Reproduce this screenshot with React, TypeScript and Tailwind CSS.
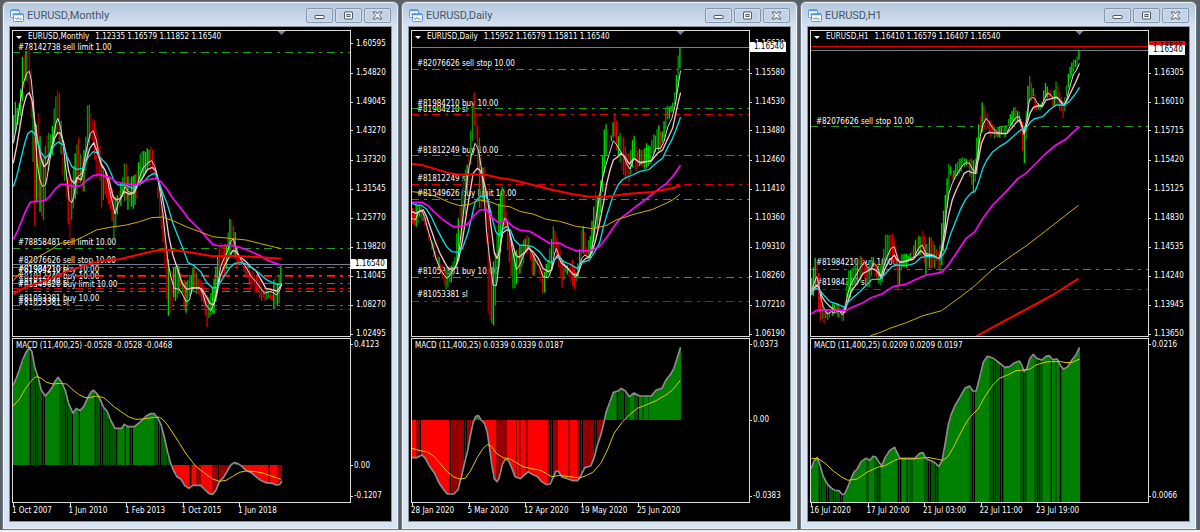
import type { ReactNode } from "react";

// All series are drawn on a grid of 3 units per pixel: "x,y x,y ..."
type Level = { y: number; color: string; solid?: boolean };
type Label = { y: number; text: string };

type Chart = {
    title: string;
    quote: string;
    x0: number;
    levels: Level[];
    labels: Label[];
    highs: string;
    lows: string;
    averages: { color: string; width: number; points: string }[];
    scale: string[];
    bid: number;
    ask?: number;
    macdText: string;
    macd: string;
    signal: string;
    zero: number;
    dark: [number, number][];
    macdScale: Label[];
    dates: string[];
};

const GREEN = "#22a022";
const RED = "#e00000";
const SLATE = "#708090";

const PRICE_TOP = 90;
const PRICE_HEIGHT = 921;
const MACD_TOP = 9;
const MACD_HEIGHT = 495;
const PLOT_WIDTH = 1020;
const BAR = 5.29;

const charts: Chart[] = [
    {
        title: "EURUSD,Monthly",
        quote: "1.12335 1.16579 1.11852 1.16540",
        x0: 36,
        levels: [
            { y: 156, color: GREEN },
            { y: 746, color: GREEN },
            { y: 792, color: SLATE, solid: true },
            { y: 802, color: GREEN },
            { y: 825, color: GREEN },
            { y: 828, color: RED },
            { y: 849, color: GREEN },
            { y: 865, color: RED },
            { y: 873, color: GREEN },
            { y: 915, color: GREEN },
            { y: 928, color: RED },
        ],
        labels: [
            { y: 141, text: "#78142738 sell limit 1.00" },
            { y: 731, text: "#78858481 sell limit 10.00" },
            { y: 785, text: "#82076626 sell stop 10.00" },
            { y: 811, text: "#81984210 buy 10.00" },
            { y: 812, text: "#81984210 sl" },
            { y: 834, text: "#81812249 buy 10.00" },
            { y: 850, text: "#81812249 sl" },
            { y: 857, text: "#81549626 buy limit 10.00" },
            { y: 899, text: "#81053381 buy 10.00" },
            { y: 912, text: "#81053381 sl" },
        ],
        highs: "40,360 46,295 52,330 58,300 64,250 68,155 76,160 88,135 94,200 98,290 104,400 115,330 122,430 130,480 138,420 146,390 152,400 158,370 164,310 173,268 180,280 184,370 192,450 200,500 208,540 216,540 224,470 236,395 244,480 252,450 258,400 264,300 270,320 276,345 284,360 292,400 300,440 310,500 318,520 328,535 336,560 344,590 352,590 360,570 368,530 374,495 378,483 386,540 398,528 410,520 420,465 432,455 445,445 456,440 466,485 474,560 484,600 494,650 500,730 510,800 520,810 536,782 548,830 558,850 570,825 584,800 600,835 612,850 624,890 636,880 648,810 660,735 668,720 680,740 690,658 700,665 706,680 714,760 724,770 736,795 748,800 760,810 776,830 790,860 806,870 820,875 826,812 836,850 846,795",
        lows: "40,440 50,385 60,370 68,300 80,250 90,300 98,450 104,690 112,600 120,640 130,670 140,560 150,500 160,460 172,400 182,460 190,530 200,600 206,710 210,745 216,650 224,630 236,560 246,550 250,610 260,490 270,420 280,440 290,540 300,540 306,640 316,600 328,610 338,680 344,735 350,670 360,640 370,590 384,630 404,625 416,575 430,545 445,510 460,520 470,540 478,640 490,720 498,860 506,960 514,960 522,900 534,910 546,870 556,960 566,910 580,880 600,890 612,920 622,985 634,960 646,940 656,860 664,800 676,830 690,760 702,760 710,810 724,800 740,850 756,865 770,880 784,900 800,910 812,890 826,945 838,920 848,850",
        averages: [
            { color: "#d8d8d8", width: 3, points: "40,430 50,380 60,310 70,250 80,220 88,214 94,240 100,300 106,400 112,490 120,540 128,560 136,555 142,530 150,480 160,420 168,370 174,355 182,380 190,430 196,490 202,540 208,600 216,608 222,590 228,550 234,530 246,520 254,480 264,430 272,400 280,392 290,420 298,470 306,500 316,510 324,545 334,590 346,642 356,610 366,590 376,560 386,575 400,580 414,550 424,520 430,505 445,488 456,482 466,500 474,530 482,580 490,640 498,720 506,790 514,830 524,865 540,868 550,885 560,905 570,900 578,865 600,862 610,880 620,915 634,932 646,905 656,850 664,800 674,775 684,755 694,725 702,716 710,745 720,770 732,790 742,805 756,830 770,845 784,865 796,880 810,875 822,878 832,885 842,870 848,850" },
            { color: "#ffc0cb", width: 4, points: "40,490 50,440 60,380 70,320 80,285 88,278 96,300 104,360 112,415 122,470 132,500 142,490 152,455 164,415 174,398 182,400 192,430 200,470 206,510 214,540 224,550 232,532 244,540 256,490 270,445 282,428 294,460 304,490 316,510 328,540 340,590 350,600 362,595 374,575 390,583 404,578 414,555 428,535 444,508 458,502 468,512 476,540 488,590 500,655 508,710 520,765 532,800 548,850 562,868 580,863 606,866 618,885 632,910 642,915 652,885 662,830 674,800 690,770 700,752 708,753 720,768 740,785 754,800 770,812 780,830 800,865 820,870 834,873 846,855" },
            { color: "#00e0e8", width: 4, points: "40,560 50,530 62,480 74,430 84,400 94,393 102,398 112,420 122,455 136,475 150,460 164,435 176,426 190,435 202,470 216,500 230,508 250,505 266,470 280,455 290,458 304,475 322,495 334,520 344,545 356,555 376,555 400,565 412,555 430,548 446,530 462,520 470,524 478,545 490,580 504,615 520,670 536,710 550,745 566,788 584,797 604,815 620,845 640,864 654,862 670,835 690,805 706,790 724,788 740,792 760,805 780,820 800,838 820,848 836,854 846,850" },
            { color: "#ff00ff", width: 5, points: "40,718 54,690 70,650 82,622 92,606 104,604 122,604 138,600 150,588 168,565 182,553 200,553 222,560 244,556 262,540 280,527 298,524 330,532 350,546 380,552 410,554 440,540 468,535 484,545 500,564 520,595 546,627 566,655 600,688 640,733 660,738 690,735 720,742 750,752 780,766 810,783 846,795" },
            { color: "#d0b000", width: 3, points: "40,842 80,795 120,768 160,745 180,730 216,726 250,710 290,690 330,682 380,675 420,665 456,653 490,651 520,662 560,680 600,695 640,710 700,716 740,720 780,730 846,746" },
            { color: "#ff0000", width: 6, points: "40,882 80,860 120,848 160,832 200,815 240,802 280,788 320,780 360,778 400,768 440,758 480,749 520,750 560,755 600,762 640,769 700,768 760,770 846,776" },
        ],
        scale: ["1.60595", "1.54820", "1.49045", "1.43270", "1.37320", "1.31545", "1.25770", "1.19820", "1.14045", "1.08270", "1.02495"],
        bid: 792,
        macdText: "MACD (11,400,25) -0.0528 -0.0528 -0.0468",
        macd: "40,150 48,132 58,105 68,75 78,52 88,38 96,50 104,95 114,125 124,165 136,183 148,170 158,155 166,138 175,127 184,140 196,165 206,205 220,235 230,220 240,227 252,215 264,188 276,168 282,166 296,182 312,218 322,228 334,258 346,280 366,280 374,268 384,275 404,275 420,262 440,243 452,236 464,236 474,248 484,268 494,305 504,350 512,380 520,402 532,425 544,432 556,452 568,460 580,451 604,451 614,462 628,475 640,478 650,465 660,440 672,428 684,408 696,388 704,383 716,386 728,394 740,406 756,413 770,425 784,436 800,443 820,445 830,450 842,448 848,438",
        signal: "40,213 60,190 75,163 92,140 104,127 114,125 124,130 140,142 160,147 178,145 200,147 216,162 236,178 256,188 268,188 290,183 312,188 324,198 340,213 364,230 386,245 408,253 430,252 464,247 480,247 492,255 504,270 520,294 540,325 560,357 590,395 620,418 640,432 660,439 680,436 700,424 720,412 740,408 770,410 790,414 810,421 845,433",
        zero: 391,
        dark: [[88, 134], [174, 220], [232, 238], [284, 356], [374, 378], [386, 398], [462, 518], [568, 578], [588, 604], [636, 690], [702, 724], [806, 810], [832, 848]],
        macdScale: [{ y: 29, text: "0.4123" }, { y: 392, text: "0.00" }, { y: 484, text: "-0.1207" }],
        dates: ["1 Oct 2007", "1 Jun 2010", "1 Feb 2013", "1 Oct 2015", "1 Jun 2018"],
    },
    {
        title: "EURUSD,Daily",
        quote: "1.15952 1.16579 1.15811 1.16540",
        x0: 33,
        levels: [
            { y: 141, color: SLATE, solid: true },
            { y: 207, color: GREEN },
            { y: 325, color: GREEN },
            { y: 343, color: RED },
            { y: 467, color: GREEN },
            { y: 554, color: RED },
            { y: 598, color: GREEN },
            { y: 833, color: GREEN },
            { y: 904, color: RED },
        ],
        labels: [
            { y: 191, text: "#82076626 sell stop 10.00" },
            { y: 310, text: "#81984210 buy 10.00" },
            { y: 328, text: "#81984210 sl" },
            { y: 452, text: "#81812249 buy 10.00" },
            { y: 538, text: "#81812249 sl" },
            { y: 583, text: "#81549626 buy limit 10.00" },
            { y: 818, text: "#81053381 buy 10.00" },
            { y: 888, text: "#81053381 sl" },
        ],
        highs: "36,630 48,620 56,610 66,620 76,660 88,690 98,720 110,750 122,780 134,810 144,800 156,790 166,770 172,670 180,630 188,560 196,500 206,480 214,370 222,262 228,325 238,400 248,500 256,490 260,560 266,650 272,800 284,780 292,700 298,600 306,560 314,570 320,650 330,700 340,760 354,750 366,730 376,720 386,700 394,750 408,770 420,780 432,820 444,780 456,720 462,665 470,710 480,740 492,800 510,790 516,770 530,810 538,770 546,680 554,680 562,740 572,700 580,650 588,570 598,590 606,520 614,380 624,370 632,440 640,375 644,332 650,345 656,400 668,395 680,440 692,470 702,392 710,440 724,450 732,440 744,432 756,430 762,395 770,400 778,372 788,395 796,345 802,310 812,312 824,300 830,230 838,160 844,135",
        lows: "36,680 48,690 60,650 70,680 84,720 96,760 110,810 122,810 134,860 142,870 152,860 162,830 172,800 180,750 190,700 200,620 210,520 222,390 230,430 238,630 246,620 254,600 260,720 266,960 275,985 282,980 290,880 300,780 310,720 318,690 328,790 338,870 348,880 356,840 368,800 380,760 390,770 400,840 412,800 424,850 432,910 440,840 456,820 464,740 474,780 484,850 490,880 498,820 512,860 524,870 536,850 544,790 556,770 570,790 580,760 592,700 604,640 612,560 622,440 634,440 644,400 652,460 664,500 676,530 690,545 702,490 712,520 726,510 738,530 750,500 762,460 776,460 790,440 804,370 820,345 830,310 844,205",
        averages: [
            { color: "#d8d8d8", width: 3, points: "36,655 46,660 56,635 66,632 74,650 84,690 96,730 108,775 120,805 132,825 142,835 152,822 160,810 170,795 178,750 186,680 194,610 202,540 208,500 216,460 226,430 236,450 244,500 252,570 260,690 270,780 280,855 290,857 298,790 306,700 314,655 320,658 330,700 340,760 350,810 360,795 370,770 386,740 398,760 410,785 420,800 430,830 446,833 456,810 464,765 470,745 480,770 492,790 510,810 528,832 538,815 546,775 556,765 568,772 576,755 584,700 592,640 600,590 608,540 618,500 630,460 642,422 652,435 664,455 674,470 684,495 692,507 704,475 712,480 724,490 740,485 756,483 770,445 784,445 794,425 806,380 818,355 828,315 838,250 844,212" },
            { color: "#ffc0cb", width: 4, points: "36,635 48,640 60,633 70,630 80,650 92,685 106,725 120,760 136,790 146,807 164,807 176,780 188,720 200,640 210,580 220,520 232,505 240,510 248,530 256,560 264,600 274,680 284,760 292,775 300,750 308,700 320,690 328,690 338,730 348,765 358,772 372,760 388,745 400,755 416,775 430,805 446,815 456,810 464,780 474,765 486,790 504,805 520,822 534,825 548,785 560,775 570,772 580,750 590,715 600,670 612,610 622,550 632,510 642,480 656,470 664,460 676,470 690,492 704,475 720,487 756,483 774,460 790,450 806,415 820,385 834,320 844,278" },
            { color: "#00e0e8", width: 4, points: "36,610 50,615 64,616 80,628 94,650 110,685 126,715 140,740 156,755 176,757 188,745 204,700 216,650 226,605 240,590 258,588 266,605 276,650 288,695 298,707 306,690 320,680 332,690 344,720 360,735 384,737 400,740 420,755 440,780 456,788 470,775 480,770 492,785 510,792 534,806 548,788 570,780 586,755 600,730 612,680 624,640 640,590 656,555 668,540 682,532 700,525 720,515 750,508 770,490 790,475 804,445 820,415 832,385 844,352" },
            { color: "#ff00ff", width: 5, points: "36,607 66,607 84,617 104,637 130,660 160,680 186,680 204,672 220,650 240,630 260,628 276,652 296,668 320,662 340,680 360,690 390,694 420,712 450,730 480,729 500,740 530,752 570,753 600,740 620,715 640,685 660,658 690,635 720,612 750,590 780,565 800,552 820,530 844,496" },
            { color: "#d0b000", width: 3, points: "36,575 80,580 110,590 150,608 180,617 210,613 240,600 270,605 300,617 330,620 360,634 400,642 440,658 480,664 530,679 580,686 620,677 650,660 700,644 760,628 800,610 820,600 842,583" },
            { color: "#ff0000", width: 6, points: "36,491 70,496 110,508 150,520 180,524 220,523 260,525 300,534 340,540 400,555 460,570 520,583 570,590 620,590 680,582 760,576 820,565 844,555" },
        ],
        scale: ["1.16630", "1.15580", "1.14530", "1.13480", "1.12460", "1.11410", "1.10360", "1.09310", "1.08260", "1.07210", "1.06190"],
        bid: 141,
        macdText: "MACD (11,400,25) 0.0339 0.0339 0.0187",
        macd: "36,368 50,368 66,360 76,370 88,392 104,415 118,445 130,462 142,477 162,477 174,465 184,428 194,385 204,345 212,300 220,262 228,244 236,242 244,255 254,265 262,290 268,330 276,390 284,432 292,440 298,430 308,388 316,374 324,373 334,393 346,425 362,431 374,420 386,410 398,418 414,425 426,440 440,449 452,447 462,425 468,410 476,408 486,425 500,430 520,437 534,437 544,422 556,398 574,393 584,368 594,330 604,300 612,268 620,232 630,205 642,172 656,168 666,160 678,168 690,185 704,174 720,183 756,183 770,166 788,160 800,135 814,118 824,100 832,75 844,37",
        signal: "36,340 60,347 80,350 100,362 120,385 140,408 160,425 180,432 196,430 212,408 232,368 250,340 264,328 276,335 290,355 310,368 330,372 350,383 370,395 400,402 420,405 440,415 456,425 480,421 510,425 540,429 560,422 580,412 604,385 624,345 644,295 668,262 690,240 714,220 740,210 770,197 800,180 820,165 844,135",
        zero: 254,
        dark: [[48, 62], [146, 218], [236, 244], [290, 322], [346, 352], [358, 364], [374, 382], [444, 474], [508, 512], [534, 612], [648, 690], [704, 720], [730, 736], [742, 748]],
        macdScale: [{ y: 29, text: "0.0373" }, { y: 255, text: "0.00" }, { y: 484, text: "-0.0383" }],
        dates: ["28 Jan 2020", "5 Mar 2020", "12 Apr 2020", "19 May 2020", "25 Jun 2020"],
    },
    {
        title: "EURUSD,H1",
        quote: "1.16410 1.16579 1.16407 1.16540",
        x0: 30,
        levels: [
            { y: 138, color: RED, solid: true },
            { y: 151, color: SLATE, solid: true },
            { y: 380, color: GREEN },
            { y: 807, color: GREEN },
            { y: 867, color: RED },
        ],
        labels: [
            { y: 365, text: "#82076626 sell stop 10.00" },
            { y: 791, text: "#81984210 buy 10.00" },
            { y: 852, text: "#81984210 sl" },
        ],
        highs: "34,850 38,800 46,775 52,790 58,830 64,900 72,930 82,930 94,920 106,900 116,910 128,920 136,900 142,810 150,805 162,800 172,775 184,770 194,770 204,800 212,775 222,765 234,790 246,790 256,700 262,705 272,695 282,705 292,750 298,790 308,755 322,760 334,755 348,720 358,710 370,693 380,740 392,705 404,730 418,760 424,720 428,640 434,620 440,555 446,490 452,500 460,520 470,490 480,478 490,470 500,475 510,470 520,480 530,465 534,360 540,370 546,305 556,325 568,350 580,375 594,380 606,375 618,378 630,355 638,330 646,315 656,325 664,345 674,380 682,310 688,228 696,240 704,275 714,310 726,310 734,260 740,250 750,265 760,280 770,245 780,265 788,290 796,300 802,250 810,195 820,180 828,170 836,175 841,137",
        lows: "34,880 40,900 50,860 58,960 66,970 72,985 82,965 96,955 110,955 130,965 138,930 150,900 162,870 176,850 194,840 208,865 220,820 234,855 248,850 258,790 272,780 286,800 296,890 304,830 320,800 340,790 358,770 370,770 376,830 390,810 410,800 424,825 430,780 436,720 442,640 452,535 460,550 472,530 484,520 500,500 512,550 522,580 532,540 540,480 550,400 560,390 572,415 580,420 600,415 616,415 630,390 646,370 660,375 668,420 672,485 676,487 682,400 690,310 700,300 710,345 722,335 736,320 750,290 760,330 774,310 784,340 790,365 796,345 806,270 816,240 830,210 841,190",
        averages: [
            { color: "#d8d8d8", width: 3, points: "34,875 42,850 50,830 56,850 62,890 70,920 82,942 94,935 106,940 116,930 128,945 136,920 144,880 154,850 166,830 180,805 194,785 202,800 212,810 222,790 232,800 244,830 252,800 262,770 274,745 284,740 292,770 300,787 320,783 345,770 356,745 368,735 378,760 400,765 418,775 426,750 434,700 440,640 448,580 458,550 468,530 480,510 490,495 500,488 510,490 520,510 526,515 534,470 542,410 550,375 560,355 568,365 580,385 594,398 610,400 622,400 634,375 650,352 660,350 668,375 674,400 682,360 690,300 698,292 706,295 714,310 726,320 734,300 744,280 752,282 762,295 770,290 778,297 786,310 794,318 802,300 812,260 822,225 832,210 841,190" },
            { color: "#ffc0cb", width: 4, points: "34,885 42,865 50,855 58,865 66,890 76,905 90,920 104,930 134,937 142,910 156,870 172,850 190,820 206,812 216,805 230,812 246,835 256,805 270,780 284,765 292,780 304,787 340,778 364,752 376,765 400,768 420,777 428,745 436,710 446,650 458,600 470,570 482,545 494,520 506,513 518,518 528,520 536,480 546,430 558,402 570,397 600,400 622,401 636,385 650,368 660,360 668,380 674,402 682,375 692,340 702,322 714,318 730,318 740,300 760,295 774,292 786,305 794,316 804,300 818,270 830,245 841,220" },
            { color: "#00e0e8", width: 4, points: "34,885 42,870 50,865 58,870 74,888 90,905 110,912 134,921 146,905 162,890 180,875 200,855 216,838 240,838 256,822 276,800 290,795 320,797 345,790 364,772 380,770 400,770 420,775 430,765 440,745 452,705 466,670 484,625 500,595 516,578 526,575 536,550 550,505 562,480 580,455 600,440 620,428 640,410 664,390 680,385 694,365 704,357 730,350 750,330 770,315 795,315 810,305 826,285 841,262" },
            { color: "#ff00ff", width: 5, points: "34,942 48,932 70,929 100,930 136,932 160,920 190,908 210,895 246,882 280,860 320,852 350,838 380,825 426,817 444,798 470,760 500,715 526,695 550,655 580,615 620,575 656,535 680,520 690,510 720,480 740,460 770,435 800,418 820,398 841,380" },
            { color: "#d0b000", width: 3, points: "212,1007 240,998 270,985 320,968 370,947 426,932 470,900 520,862 580,808 640,765 680,738 740,692 800,645 838,616" },
            { color: "#ff0000", width: 6, points: "530,1009 600,971 680,928 760,885 838,836" },
        ],
        scale: ["", "1.16305", "1.16010", "1.15715", "1.15420", "1.15125", "1.14830", "1.14535", "1.14240", "1.13945", "1.13650"],
        bid: 151,
        ask: 141,
        macdText: "MACD (11,400,25) 0.0209 0.0209 0.0197",
        macd: "34,400 42,378 52,367 60,390 70,425 84,450 96,460 106,467 118,467 126,478 134,477 142,460 152,435 162,412 172,402 184,380 198,370 210,376 220,364 228,366 236,380 246,392 256,368 270,346 284,337 292,352 300,370 345,370 360,355 370,353 378,370 390,376 404,382 418,394 428,375 436,330 446,270 456,235 468,208 484,182 496,160 510,153 520,168 530,168 540,130 552,80 564,64 582,70 600,84 616,97 630,95 646,83 660,78 668,92 674,110 682,102 692,70 702,58 712,70 728,75 740,64 750,62 760,74 774,72 784,92 792,102 804,97 816,78 830,60 841,37",
        signal: "34,370 56,372 76,385 100,408 124,425 144,436 172,432 204,410 236,396 256,392 284,376 300,371 340,372 384,367 410,372 430,376 444,366 460,340 476,308 496,270 512,245 536,222 556,185 580,150 600,130 624,120 650,107 690,103 710,90 740,81 780,79 800,83 820,82 841,72",
        zero: 504,
        dark: [[54, 130], [198, 206], [224, 244], [292, 310], [318, 322], [330, 340], [370, 420], [508, 526], [568, 616], [660, 684], [706, 728], [752, 758], [766, 772], [778, 790]],
        macdScale: [{ y: 29, text: "0.0216" }, { y: 484, text: "0.0066" }],
        dates: ["16 Jul 2020", "17 Jul 20:00", "21 Jul 03:00", "22 Jul 11:00", "23 Jul 19:00"],
    },
];

const parse = (points: string) => points.split(" ").map((p) => p.split(",").map(Number));

// linear interpolation along a polyline
function sample(pts: number[][], x: number) {
    if (x <= pts[0][0]) return pts[0][1];
    for (let i = 1; i < pts.length; i++) {
        if (x <= pts[i][0]) {
            const [ax, ay] = pts[i - 1];
            const [bx, by] = pts[i];
            return ay + ((by - ay) * (x - ax)) / (bx - ax);
        }
    }
    return pts[pts.length - 1][1];
}

// repeatable noise in 0..1
const noise = (n: number) => {
    const v = Math.sin(n * 12.9898) * 43758.5453;
    return v - Math.floor(v);
};

const percent = (y: number, top: number, height: number) => `${((y - top) / height) * 100}%`;

function barPositions(x0: number) {
    return Array.from({ length: 153 }, (_, i) => x0 + 5 + i * BAR);
}

function Candles({ chart }: { chart: Chart }) {
    const highs = parse(chart.highs);
    const lows = parse(chart.lows);
    const mid = (x: number) => sample(highs, x) + sample(lows, x);
    return (
        <g strokeWidth={4}>
            {barPositions(chart.x0).map((x, i) => {
                const y1 = sample(highs, x) + noise(i) * 14 - 4;
                const y2 = sample(lows, x) - noise(i + 500) * 24 + 4;
                const up = mid(x + 4) < mid(x - 4) !== noise(i + 90) > 0.88;
                const bright = noise(i + 40) > 0.45;
                const color = up ? (bright ? "#00d800" : "#009600") : bright ? "#dc0000" : "#960000";
                return <line key={i} x1={x} x2={x} y1={y1} y2={Math.max(y2, y1 + 18)} stroke={color} />;
            })}
        </g>
    );
}

function Histogram({ chart }: { chart: Chart }) {
    const line = parse(chart.macd);
    return (
        <g shapeRendering="crispEdges">
            {barPositions(chart.x0).map((x, i) => {
                const y = sample(line, x);
                const positive = y < chart.zero;
                const dim = chart.dark.some(([a, b]) => x >= a && x <= b);
                const fill = positive ? (dim ? "#005800" : "#008000") : dim ? "#960000" : "#ff0000";
                return (
                    <rect
                        key={i}
                        x={x - 2}
                        y={Math.min(y, chart.zero)}
                        width={dim ? 4 : 6}
                        height={Math.abs(y - chart.zero)}
                        fill={fill}
                    />
                );
            })}
        </g>
    );
}

function AppIcon() {
    return (
        <svg viewBox="0 0 14 13" className="h-[13px] w-3.5 shrink-0">
            <rect x="0.5" y="0.5" width="9" height="8" rx="1" fill="#fff" stroke="#5b9be6" />
            <path d="M1 1.5h8" stroke="#5b9be6" strokeWidth="1.5" />
            <path d="M2 5.5l1.500-1 1.500 1.500" stroke="#4a8ee0" fill="none" />
            <rect x="3.500" y="4.500" width="10" height="8" rx="1" fill="#fff" stroke="#5b9be6" />
            <path d="M4 5.500h9" stroke="#5b9be6" strokeWidth="1.500" />
            <path d="M5 8.500l1.500 2 1.500-2 1.500 2 1.500-1 1 1" stroke="#4a8ee0" fill="none" />
        </svg>
    );
}

function WindowButton({ label, children }: { label: string; children: ReactNode }) {
    return (
        <button
            type="button"
            aria-label={label}
            className="flex h-[15px] w-[27px] items-center justify-center rounded-[2px] border border-[#8595ab] bg-[#c3d2e4] shadow-[inset_0_0_0_1px_#d3dfec]"
        >
            <svg viewBox="0 0 11 9" className="h-[9px] w-[11px]" fill="#fff" stroke="#4d5867">
                {children}
            </svg>
        </button>
    );
}

function Header({ title }: { title: string }) {
    return (
        <header className="flex h-[25px] shrink-0 items-center gap-[3px] pt-0.5">
            <AppIcon />
            <h2 className="grow truncate font-[Roboto,sans-serif] text-[11px] leading-4 text-[#46566a]">{title}</h2>
            <div className="flex gap-0.5">
                <WindowButton label="Minimize">
                    <rect x="1" y="4.500" width="9" height="3" rx="0.500" />
                </WindowButton>
                <WindowButton label="Restore">
                    <rect x="1.500" y="1" width="8" height="7" rx="0.500" />
                    <rect x="4" y="3.500" width="3" height="2" fill="#c3d2e4" />
                </WindowButton>
                <WindowButton label="Close">
                    <path d="M1 1h3l1.500 2 1.500-2h3L7.300 4.500 10 8H7L5.500 6 4 8H1l2.700-3.500z" strokeWidth="0.900" />
                </WindowButton>
            </div>
        </header>
    );
}

function PricePlot({ chart }: { chart: Chart }) {
    return (
        <div className="relative min-w-0 grow overflow-hidden border border-[#dcdcdc]">
            {chart.labels.map(({ y, text }) => (
                <span
                    key={text}
                    className="absolute left-[5px] -translate-y-1/2 whitespace-nowrap"
                    style={{ top: percent(y, PRICE_TOP, PRICE_HEIGHT) }}
                >
                    {text}
                </span>
            ))}
            <svg
                viewBox={`${chart.x0 + 3} ${PRICE_TOP + 3} ${PLOT_WIDTH - 6} ${PRICE_HEIGHT - 6}`}
                preserveAspectRatio="none"
                className="absolute inset-0 h-full w-full"
            >
                <g shapeRendering="crispEdges">
                    {chart.levels.map((level) => (
                        <line
                            key={level.y}
                            x1={chart.x0}
                            x2={chart.x0 + PLOT_WIDTH}
                            y1={level.y}
                            y2={level.y}
                            stroke={level.color}
                            strokeWidth={1}
                            strokeDasharray={level.solid ? undefined : "8 5 3 5"}
                            vectorEffect="non-scaling-stroke"
                        />
                    ))}
                </g>
                <Candles chart={chart} />
                {chart.averages.map(({ color, width, points }) => (
                    <polyline key={color} points={points} fill="none" stroke={color} strokeWidth={width} strokeLinejoin="round" />
                ))}
                <path d={`M${chart.x0 + 799} 93h24l-12 12z`} fill="#708296" />
            </svg>
            <p className="relative flex items-center gap-1.5 pl-[3px] whitespace-nowrap">
                <svg viewBox="0 0 6 3" className="h-[3px] w-1.5" fill="#fff">
                    <path d="M0 0h6L3 3z" />
                </svg>
                <span>{chart.title}</span>
                <span>{chart.quote}</span>
            </p>
        </div>
    );
}

function PriceScale({ chart }: { chart: Chart }) {
    return (
        <div className="relative w-10 shrink-0">
            {chart.scale.map((text, i) =>
                text ? (
                    <span
                        key={text}
                        className="absolute left-0 flex -translate-y-1/2 items-center gap-[3px]"
                        style={{ top: percent(132 + i * 87, PRICE_TOP, PRICE_HEIGHT) }}
                    >
                        <i className="h-px w-0.5 bg-[#dcdcdc]" />
                        {text}
                    </span>
                ) : null,
            )}
            {chart.ask && (
                <span
                    className="absolute left-0 h-3 w-9 -translate-y-1/2 bg-[#f00] pl-1 text-black"
                    style={{ top: percent(chart.ask, PRICE_TOP, PRICE_HEIGHT) }}
                >
                    1.16585
                </span>
            )}
            <span
                className="absolute left-0 h-2.5 w-9 -translate-y-1/2 bg-white pl-1 leading-[10px] text-black"
                style={{ top: percent(chart.bid, PRICE_TOP, PRICE_HEIGHT) }}
            >
                1.16540
            </span>
        </div>
    );
}

function MacdPlot({ chart }: { chart: Chart }) {
    return (
        <div className="relative min-w-0 grow overflow-hidden border border-[#dcdcdc]">
            <svg
                viewBox={`${chart.x0 + 3} ${MACD_TOP + 3} ${PLOT_WIDTH - 6} ${MACD_HEIGHT - 6}`}
                preserveAspectRatio="none"
                className="absolute inset-0 h-full w-full"
            >
                <Histogram chart={chart} />
                <polyline points={chart.macd} fill="none" stroke="#8c8c8c" strokeWidth={5} strokeLinejoin="round" />
                <polyline points={chart.signal} fill="none" stroke="#e0c800" strokeWidth={3} />
            </svg>
            <p className="relative pt-px pl-[3px] whitespace-nowrap">{chart.macdText}</p>
        </div>
    );
}

function ChartWindow({ chart }: { chart: Chart }) {
    return (
        <section className="flex min-w-0 flex-col rounded-t-md border border-[#6f7a88] bg-[#d7e4f2] bg-linear-to-b from-[#b4c7dd] to-[#d7e4f2] to-[26px] px-[7px] pb-2 shadow-[inset_0_0_0_1px_#eef4fa]">
            <Header title={chart.title} />
            <div className="flex grow flex-col gap-px bg-black pt-[3px] pl-0.5 font-['DejaVu_Sans_Condensed','DejaVu_Sans',sans-serif] text-[8px] leading-[12px] text-white outline outline-[#8d939b]">
                <div className="flex grow-[307] basis-[307px]">
                    <PricePlot chart={chart} />
                    <PriceScale chart={chart} />
                </div>
                <div className="flex grow-[165] basis-[165px]">
                    <MacdPlot chart={chart} />
                    <div className="relative w-10 shrink-0">
                        {chart.macdScale.map(({ y, text }) => (
                            <span
                                key={text}
                                className="absolute left-0 flex -translate-y-1/2 items-center gap-px"
                                style={{ top: percent(y, MACD_TOP, MACD_HEIGHT) }}
                            >
                                <i className="h-px w-0.5 bg-[#dcdcdc]" />
                                {text}
                            </span>
                        ))}
                    </div>
                </div>
                <div className="mr-10 -mt-px grid h-[18px] grid-cols-6 leading-[10px]">
                    {chart.dates.map((date) => (
                        <span key={date} className="whitespace-nowrap">
                            <i className="ml-px block h-[3px] w-px bg-[#dcdcdc]" />
                            {date}
                        </span>
                    ))}
                </div>
            </div>
        </section>
    );
}

export default function App() {
    return (
        <main className="grid min-h-screen grid-cols-1 gap-0.5 border-b-2 border-[#f0f0f0] bg-[#5c5f64] pt-px pr-[3px] pl-0.5 md:grid-cols-3">
            {charts.map((chart) => (
                <ChartWindow key={chart.title} chart={chart} />
            ))}
        </main>
    );
}
